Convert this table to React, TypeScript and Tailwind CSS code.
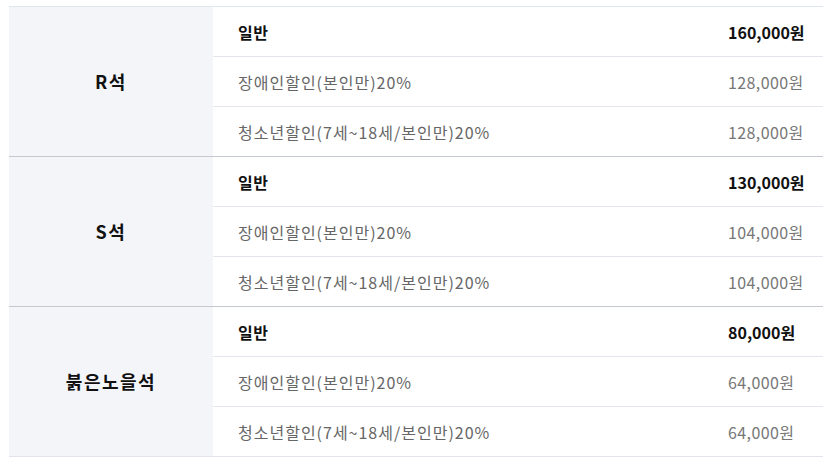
import React from 'react';

type Row = { label: string; price: string; main?: boolean };
type Group = { seat: string; rows: Row[] };

const groups: Group[] = [
  {
    seat: 'R석',
    rows: [
      { label: '일반', price: '160,000원', main: true },
      { label: '장애인할인(본인만)20%', price: '128,000원' },
      { label: '청소년할인(7세~18세/본인만)20%', price: '128,000원' },
    ],
  },
  {
    seat: 'S석',
    rows: [
      { label: '일반', price: '130,000원', main: true },
      { label: '장애인할인(본인만)20%', price: '104,000원' },
      { label: '청소년할인(7세~18세/본인만)20%', price: '104,000원' },
    ],
  },
  {
    seat: '붉은노을석',
    rows: [
      { label: '일반', price: '80,000원', main: true },
      { label: '장애인할인(본인만)20%', price: '64,000원' },
      { label: '청소년할인(7세~18세/본인만)20%', price: '64,000원' },
    ],
  },
];

export default function App() {
  return (
    <div
      className="w-[834px] h-[468px] bg-white pt-[6px] pl-[9px]"
      style={{ fontFamily: '"Noto Sans CJK KR", "Noto Sans", sans-serif' }}
    >
      <div className="w-[814px] border-t border-[#e1e5ec]">
        {groups.map((g, gi) => (
          <div
            key={g.seat}
            className={
              'flex border-b ' +
              (gi === groups.length - 1 ? 'border-[#e1e4ea]' : 'border-[#c4c8d1]')
            }
          >
            {/* seat name */}
            <div className="w-[204px] bg-[#f4f5f9] flex items-center justify-center text-[18px] font-bold text-[#111] tracking-[1.5px]">
              {g.seat}
            </div>

            {/* price rows */}
            <div className="flex-1">
              {g.rows.map((r, ri) => (
                <div
                  key={ri}
                  className={
                    'flex items-center pl-[25px] text-[16px] leading-none ' +
                    (ri < g.rows.length - 1 ? 'h-[50px] border-b border-[#e3e6ec]' : 'h-[49px]')
                  }
                >
                  <div
                    className={
                      'flex-1 ' +
                      (r.main ? 'font-bold text-[#111] tracking-[0.5px]' : 'text-[#666] tracking-[1px]')
                    }
                  >
                    {r.label}
                  </div>
                  <div
                    className={
                      'w-[95px] ' +
                      (r.main ? 'font-bold text-[#111]' : 'text-[#777] tracking-[0.4px]')
                    }
                  >
                    {r.price}
                  </div>
                </div>
              ))}
            </div>
          </div>
        ))}
      </div>
    </div>
  );
}
